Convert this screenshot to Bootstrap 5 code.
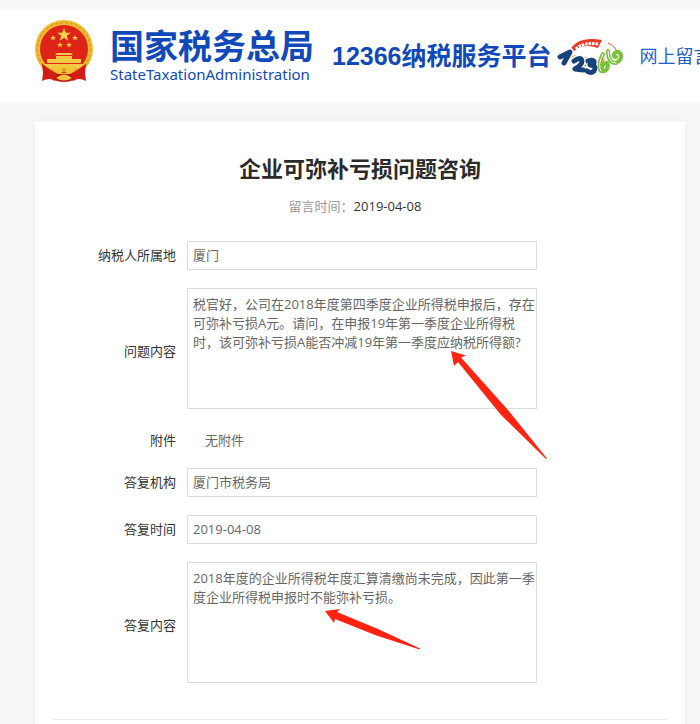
<!DOCTYPE html>
<html lang="zh-CN">
<head>
<meta charset="utf-8">
<meta name="viewport" content="width=device-width, initial-scale=1">
<title>企业可弥补亏损问题咨询</title>
<link href="https://cdn.jsdelivr.net/npm/bootstrap@5.3.0/dist/css/bootstrap.min.css" rel="stylesheet">
<style>
body{background:#f5f6f8;color:#333;font-family:"Open Sans","Noto Sans CJK SC",sans-serif;font-size:13px;line-height:19px;overflow-x:hidden}
.site-head{margin-top:9px;min-height:94px;padding-left:35px;color:#1149b8}
.emblem{width:60px;height:64px;margin-bottom:8px}
.brand{margin-left:15px;color:inherit}
.brand-cn{font-size:34px;line-height:36px}
.brand-en{font-family:"Noto Sans",sans-serif;font-size:15px;line-height:20px}
.platform{margin-left:18px;font-family:"Liberation Sans","Noto Sans CJK SC",sans-serif;font-size:25px;line-height:32px}
.hotline{width:68px;height:44px;margin-left:4px}
.head-link{margin-left:16px;font-size:18px;line-height:24px;color:#1c62c8}
.sheet{margin:18px 15px 0 35px;padding:31px 18px 40px;box-shadow:0 0 4px #e8eaee}
.sheet h1{font-size:22px;line-height:32px;color:#2b2b2b}
.posted{margin:13px 10px 25px 0}
.posted span{color:#999}
.rows{gap:18px}
.rows label,.rows .tag{width:123px;margin-right:11px;text-align:right;flex:none}
.rows .tall label{padding-top:6px}
.field{max-width:350px}
.field .form-control{border:1px solid #ddd;border-radius:0;color:#666;font-size:13px;line-height:19px;padding:4px 0 4px 5px;display:block;min-height:29px}
.field textarea.form-control{height:121px;padding-top:6px;resize:none;overflow:hidden}
.none{padding-left:18px;color:#666}
.attach{padding-top:4px}
.arrow{position:absolute;pointer-events:none;fill:#ff2412}
.arrow-q{left:263px;top:62px}
.arrow-a{left:137px;top:46px}
.rule{margin:36px 0 0;border-top:1px solid #bbb}
</style>
</head>
<body>
<header class="site-head bg-white d-flex align-items-center text-nowrap overflow-hidden">
<svg class="emblem flex-shrink-0" viewBox="0 0 60 64" aria-hidden="true">
<circle cx="29" cy="29" r="29" fill="#eebb30"/>
<circle cx="29" cy="29" r="26.500" fill="none" stroke="#dc9f22" stroke-width="1.500" stroke-dasharray="3 2"/>
<circle cx="29" cy="29" r="24" fill="#de2318"/>
<path d="M29 8l1.800 4.700h5l-4 3.100 1.500 4.900-4.300-3-4.300 3 1.500-4.900-4-3.100h5z" fill="#f9d34b"/>
<g fill="#f6c944"><path d="M18 15l.8 1.900h2.200l-1.700 1.400.7 2.200-2-1.400-2 1.400.7-2.200-1.700-1.400h2.200zM40 15l.8 1.900h2.200l-1.700 1.400.7 2.200-2-1.400-2 1.400.7-2.200-1.700-1.400h2.200zM25 22l.8 1.900H28l-1.700 1.400.7 2.200-2-1.400-2 1.400.7-2.200-1.700-1.400h2.200zM34 22l.8 1.900H37l-1.700 1.400.7 2.200-2-1.400-2 1.400.7-2.200-1.700-1.400h2.200z"/>
<path d="M22 33h14l2 2H20zM21 36h16v3h9v4H12v-4h9zM8 44h42l-6 5H14z"/></g>
<path d="M7 44l2 1q7 6 14 9l-3 7q-6-4-13 0l1-8zM51 44l-2 1q-7 6-14 9l3 7q6-4 13 0l-1-8z" fill="#d31c13"/>
<path d="M22 54h14l3 6q-10 4-20 0z" fill="#b9160f"/>
<path d="M16 48q8-2 10 1 3-4 6 0 2-3 10-1-4 6-10 5-3-3-6 0-6 1-10-5zM21 58q8-7 16 0-8 5-16 0z" fill="#f1c23b"/>
<circle cx="29" cy="50" r="2" fill="#e09b20"/>
</svg>
<a class="brand text-decoration-none d-flex flex-column" href="#"><span class="brand-cn fw-bold">国家税务总局</span><span class="brand-en">StateTaxationAdministration</span></a>
<div class="platform fw-bold">12366纳税服务平台</div>
<svg class="hotline flex-shrink-0" viewBox="0 0 68 44" role="img" aria-label="12366">
<path d="M12 20Q19 1 46 6l-4 8Q24 8 16 20z" fill="#e93a25"/>
<path d="M20 15Q27 8 42 10" fill="none" stroke="#fff" stroke-width="3" stroke-dasharray="2.500 1"/>
<path d="M52 9q7 3 9 9" fill="none" stroke="#e0522c" stroke-width="1"/>
<path d="M10 24q10-6 22 0t18-1l-8 15q-20 1-32-14z" fill="#f58a3a"/>
<g fill="none" stroke-linecap="round" stroke-linejoin="round">
<g stroke="#fff" stroke-width="8"><path d="M5 22l9-4-6 11M18 27q7-5 8 0 0 4-7 8l8 1M32 27q7-2 6 2l-4 2q7 0 4 6-3 3-7 0"/></g>
<g stroke="#17437c" stroke-width="5"><path d="M4 23l10-5-6 11M18 27q7-5 8 0 0 4-7 8l8 1M32 27q7-2 6 2l-4 2q7 0 4 6-3 3-7 0"/></g>
<g stroke="#79c13c" stroke-width="4"><path d="M47 20q-6 12-2 17 6 1 7-5 0-5-4-2-2 2-2 4"/><path d="M52 17q0 12 8 12 6-3 5-8-3-6-7-1-1 3 2 3"/></g>
<g stroke="#fff" stroke-width="1"><path d="M47 20q-6 12-2 17M52 17q0 12 8 12"/></g></g>
</svg>
<a class="head-link text-decoration-none" href="#">网上留言</a>
</header>
<main class="sheet bg-white">
<h1 class="fw-bold text-center m-0">企业可弥补亏损问题咨询</h1>
<p class="posted text-center"><span>留言时间：</span>2019-04-08</p>
<form class="rows d-flex flex-column">
<div class="d-flex align-items-center"><label for="area">纳税人所属地</label><div class="field flex-grow-1"><input class="form-control" id="area" value="厦门" readonly></div></div>
<div class="tall d-flex align-items-center"><label for="question">问题内容</label><div class="field flex-grow-1 position-relative"><textarea class="form-control" id="question" readonly>税官好，公司在2018年度第四季度企业所得税申报后，存在可弥补亏损A元。请问，在申报19年第一季度企业所得税时，该可弥补亏损A能否冲减19年第一季度应纳税所得额?</textarea>
<svg class="arrow arrow-q" width="98" height="112" viewBox="0 0 98 112" aria-hidden="true"><path d="M1 1l15 4.500-5 2L58 60l39 48.500-1 .5L51 65 8 12l-4 4z"/></svg></div></div>
<div class="attach d-flex align-items-center"><span class="tag">附件</span><span class="none">无附件</span></div>
<div class="d-flex align-items-center"><label for="office">答复机构</label><div class="field flex-grow-1"><input class="form-control" id="office" value="厦门市税务局" readonly></div></div>
<div class="d-flex align-items-center"><label for="date">答复时间</label><div class="field flex-grow-1"><input class="form-control" id="date" value="2019-04-08" readonly></div></div>
<div class="tall d-flex align-items-center"><label for="answer">答复内容</label><div class="field flex-grow-1 position-relative"><textarea class="form-control" id="answer" readonly>2018年度的企业所得税年度汇算清缴尚未完成，因此第一季度企业所得税申报时不能弥补亏损。</textarea>
<svg class="arrow arrow-a" width="98" height="42" viewBox="0 0 98 42" aria-hidden="true"><path d="M1 3l15-2-3 3 41 17 42 19.500-.5 1L51 27 11 11l-1 4z"/></svg></div></div>
</form>
<hr class="rule">
</main>
<script src="https://cdn.jsdelivr.net/npm/bootstrap@5.3.0/dist/js/bootstrap.bundle.min.js"></script>
</body>
</html>
